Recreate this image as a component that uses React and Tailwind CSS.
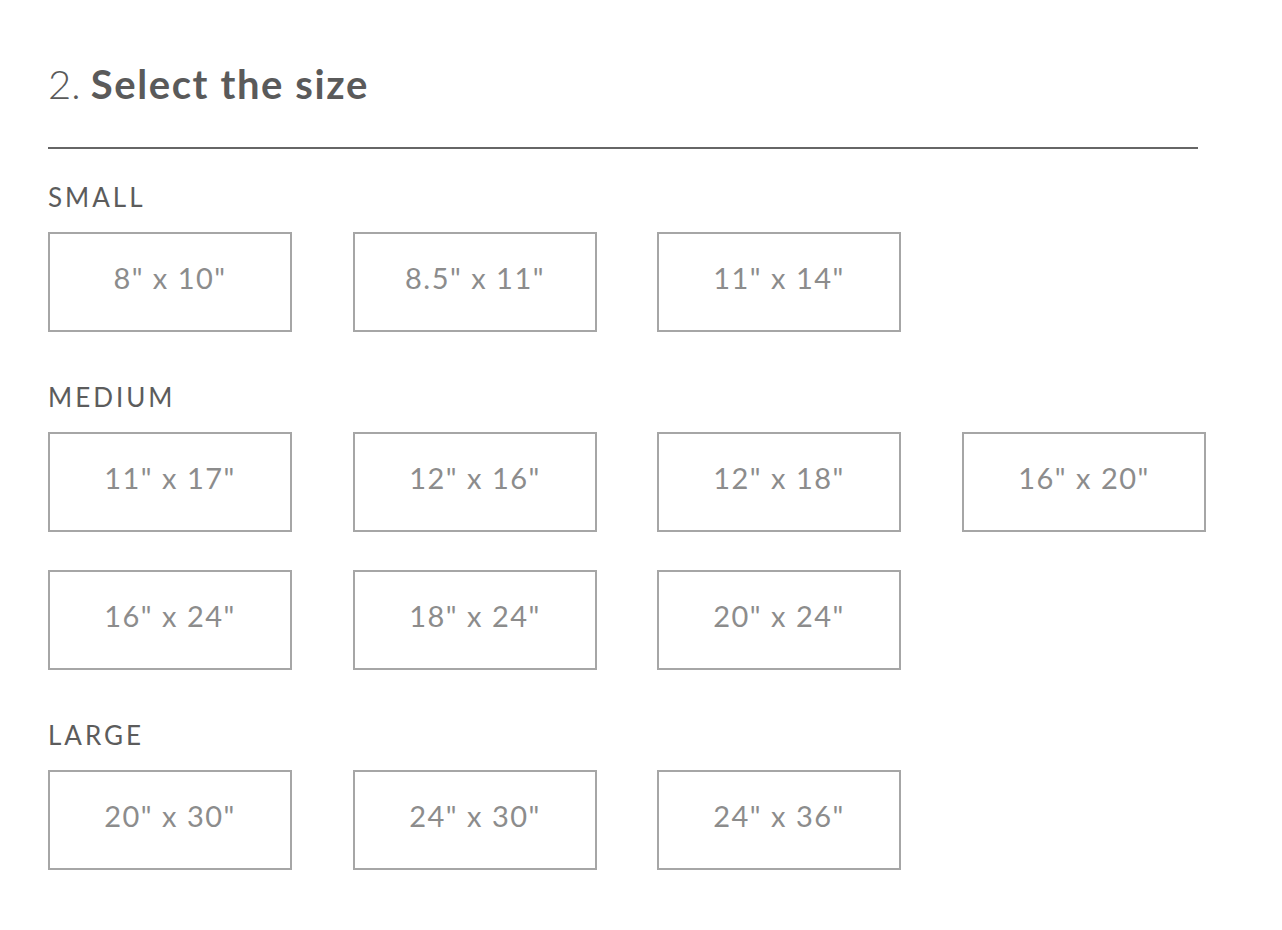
const groups = [
  { label: "SMALL", sizes: ['8" x 10"', '8.5" x 11"', '11" x 14"'] },
  {
    label: "MEDIUM",
    sizes: ['11" x 17"', '12" x 16"', '12" x 18"', '16" x 20"', '16" x 24"', '18" x 24"', '20" x 24"'],
  },
  { label: "LARGE", sizes: ['20" x 30"', '24" x 30"', '24" x 36"'] },
];

export default function App() {
  return (
    <div className="min-h-screen bg-white px-[48px] pt-[65px] pb-[60px] font-['Lato',sans-serif]">
      <h2 className="text-[40px] leading-[39px] text-[#5a5a5a]">
        <span className="font-light">2.</span>{" "}
        <span className="font-bold tracking-[1.6px]">Select the size</span>
      </h2>
      <div className="mt-[43px] h-[2px] w-[1150px] bg-[#666666]" />

      <div className="mt-[35px] flex flex-col gap-[52px]">
        {groups.map((group) => (
          <section key={group.label}>
            <h3 className="text-[26px] leading-[26px] tracking-[3px] text-[#5c5c5c]">{group.label}</h3>
            <div className="mt-[22px] grid grid-cols-[305px_304px_305px_244px] gap-y-[38px]">
              {group.sizes.map((size) => (
                <button
                  key={size}
                  type="button"
                  className="flex h-[100px] w-[244px] items-center justify-center border-2 border-[#a6a6a6] bg-white pb-[9px] text-[29px] tracking-[1.5px] text-[#8c8c8c]"
                >
                  {size}
                </button>
              ))}
            </div>
          </section>
        ))}
      </div>
    </div>
  );
}
